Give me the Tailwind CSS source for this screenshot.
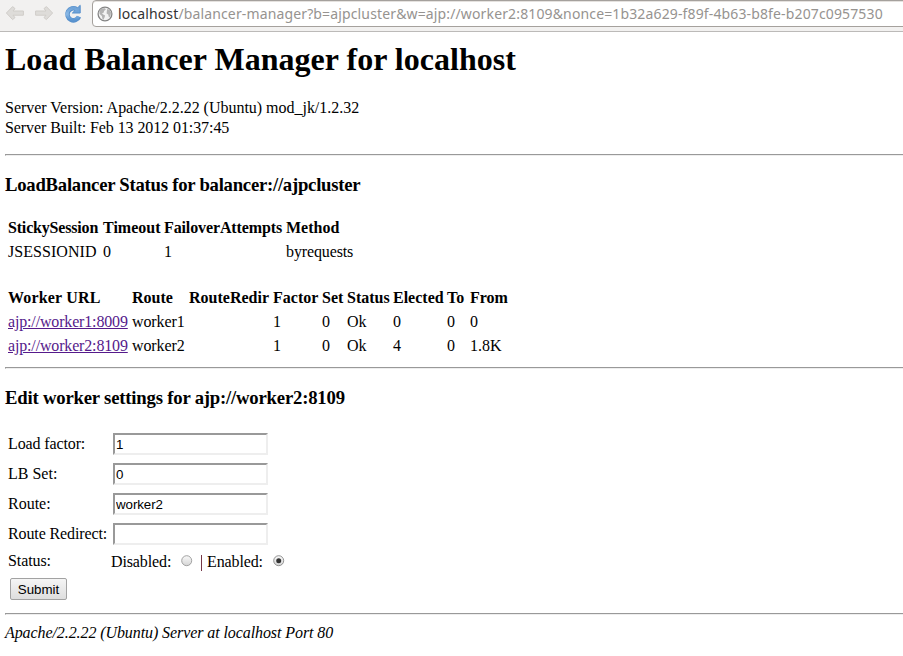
<!DOCTYPE html>
<html lang="en">
<head>
<meta charset="utf-8">
<title>Balancer Manager</title>
<script src="https://cdn.jsdelivr.net/npm/@tailwindcss/browser@4"></script>
</head>
<body class="bg-white text-black text-[16px] leading-5 font-['Liberation_Serif',serif] overflow-hidden h-[656px] whitespace-nowrap">
<header class="flex h-8 bg-[#f2f1f0] border-b border-[#bcbab8] overflow-hidden">
  <svg class="w-[92px] h-[27px] shrink-0" viewBox="0 0 92 27" fill="none">
    <defs><linearGradient id="b" x2="0" y2="1"><stop stop-color="#6fa3d8"/><stop offset=".5" stop-color="#8ab9e6"/><stop offset="1" stop-color="#5a94d0"/></linearGradient></defs>
    <path d="M12.6 6.6 L6.4 13 L12.6 19.6 L15 17.6 L13 15.2 H23.4 V11 H13 L15 8.6 Z" fill="#dedcd9" stroke="#d0cdc9" stroke-linejoin="round"/>
    <path d="M46.4 6.6 L52.6 13 L46.4 19.6 L44 17.6 L46 15.2 H35.6 V11 H46 L44 8.6 Z" fill="#dedcd9" stroke="#d0cdc9" stroke-linejoin="round"/>
    <path d="M79 16.6 A6 6 0 1 1 76.6 9.2" stroke="#5790cc" stroke-width="4.6"/>
    <path d="M80.2 5.3 V13 H72.4 Z" fill="#6fa3d8" stroke="#5790cc" stroke-linejoin="round"/>
    <path d="M78.4 16.6 A5.9 5.9 0 1 1 77 9.6" stroke="url(#b)" stroke-width="3"/>
  </svg>
  <div class="flex items-center w-[820px] shrink-0 h-[27px] bg-white border border-[#a5a19d] rounded-[4px] shadow-[inset_0_1px_0_#e5e2df]">
    <svg class="ml-[4px] w-4 h-4 shrink-0" viewBox="0 0 16 16">
      <circle cx="8" cy="8" r="6.9" fill="#f2f2f2" stroke="#858585" stroke-width="1.3"/>
      <path d="M2.3 4.8 L4.6 2.4 L8 2.2 L8.8 3.6 L7 5 L6.8 6.6 L5 7.3 L6.2 8.4 L8.1 9.4 L7.6 11.2 L6.4 13.7 L5.4 12.8 L4.9 10 L2.6 8 Z M10.2 3 L12.6 3.8 L14 6.6 L13.4 10.2 L12 11.4 L11.2 8.6 L9.6 7.6 L9.8 5.2 Z" fill="#b3b3b3"/>
    </svg>
    <div class="ml-[5px] font-['Noto_Sans','Open_Sans',sans-serif] text-[14px] leading-5 tracking-[0.137px] text-[#969390]"><span class="text-[#333]">localhost</span>/balancer-manager?b=ajpcluster&amp;w=ajp://worker2:8109&amp;nonce=1b32a629-f89f-4b63-b8fe-b207c0957530</div>
  </div>
</header>
<main class="pl-[5px]">
  <h1 class="pt-[9px] h-[66px] text-[32px] leading-9 font-bold tracking-[0.02px]">Load Balancer Manager for localhost</h1>
  <p class="tracking-[-0.02px]">Server Version: Apache/2.2.22 (Ubuntu) mod_jk/1.2.32</p>
  <p class="tracking-[-0.085px]">Server Built: Feb 13 2012 01:37:45</p>
  <div class="mt-4 h-0.5 border border-r-0 border-t-[#999] border-l-[#999] border-b-[#eee]"></div>
  <h3 class="mt-[19px] text-[18.72px] leading-5 font-bold tracking-[-0.25px]">LoadBalancer Status for balancer://ajpcluster</h3>
  <div class="mt-[21px] ml-[3px] grid grid-cols-[95px_61px_122px_100px] auto-rows-[24px] leading-6">
    <b class="tracking-[-0.18px]">StickySession</b><b>Timeout</b><b class="tracking-[-0.12px]">FailoverAttempts</b><b>Method</b>
    <span class="tracking-[0.05px]">JSESSIONID</span><span>0</span><span>1</span><span class="tracking-[-0.12px]">byrequests</span>
  </div>
  <div class="mt-[22px] ml-[3px] grid grid-cols-[124px_57px_84px_49px_25px_46px_54px_23px_60px] auto-rows-[24px] leading-6">
    <b class="tracking-[0.18px]">Worker URL</b><b>Route</b><b>RouteRedir</b><b>Factor</b><b>Set</b><b>Status</b><b>Elected</b><b>To</b><b>From</b>
    <a class="w-fit tracking-[-0.16px] text-[#551a8b] underline">ajp://worker1:8009</a><span class="tracking-[-0.1px]">worker1</span><span></span><span>1</span><span>0</span><span>Ok</span><span>0</span><span>0</span><span>0</span>
    <a class="w-fit tracking-[-0.16px] text-[#551a8b] underline">ajp://worker2:8109</a><span class="tracking-[-0.1px]">worker2</span><span></span><span>1</span><span>0</span><span>Ok</span><span>4</span><span>0</span><span>1.8K</span>
  </div>
  <div class="mt-[9px] h-0.5 border border-r-0 border-t-[#999] border-l-[#999] border-b-[#eee]"></div>
  <h3 class="mt-[19px] text-[18.72px] leading-5 font-bold tracking-[-0.2px]">Edit worker settings for ajp://worker2:8109</h3>
  <form class="mt-[21px] ml-[3px]">
    <div class="grid grid-cols-[105px_155px] auto-rows-[30px] items-center">
      <label class="tracking-[-0.12px]">Load factor:</label><input value="1" class="h-[22px] border-2 border-t-[#999] border-l-[#999] border-b-[#eee] border-r-[#eee] px-px font-['Liberation_Sans',sans-serif] text-[13.33px] leading-4">
      <label>LB Set:</label><input value="0" class="h-[22px] border-2 border-t-[#999] border-l-[#999] border-b-[#eee] border-r-[#eee] px-px font-['Liberation_Sans',sans-serif] text-[13.33px] leading-4">
      <label>Route:</label><input value="worker2" class="h-[22px] border-2 border-t-[#999] border-l-[#999] border-b-[#eee] border-r-[#eee] px-px font-['Liberation_Sans',sans-serif] text-[13.33px] leading-4 tracking-[-0.08px]">
      <label class="tracking-[-0.12px]">Route Redirect:</label><input value="" class="h-[22px] border-2 border-t-[#999] border-l-[#999] border-b-[#eee] border-r-[#eee] px-px font-['Liberation_Sans',sans-serif] text-[13.33px] leading-4">
    </div>
    <div class="flex h-[29px] pt-[2px]">
      <span class="w-[103px] tracking-[-0.1px]">Status:</span>
      <span class="w-[70px] pt-px tracking-[-0.12px]">Disabled:</span>
      <svg class="w-3 h-3 mt-[4px]" viewBox="0 0 12 12"><defs><linearGradient id="r" x2="0" y2="1"><stop stop-color="#fafafa"/><stop offset="1" stop-color="#d4d4d4"/></linearGradient></defs><circle cx="5.7" cy="5.7" r="5" fill="url(#r)" stroke="#999" stroke-width=".9"/></svg>
      <span class="ml-[8px] mt-[4px] w-px h-4 bg-[#753848]"></span>
      <span class="ml-[5px] w-[66px] pt-px tracking-[-0.12px]">Enabled:</span>
      <svg class="w-3 h-3 mt-[4px]" viewBox="0 0 12 12"><circle cx="5.7" cy="5.7" r="5" fill="url(#r)" stroke="#888" stroke-width=".9"/><circle cx="5.7" cy="5.7" r="2.5" fill="#333"/></svg>
    </div>
    <button type="button" class="block ml-[2px] w-[57px] h-[22px] rounded-[2px] border border-[#a2a2a2] bg-linear-to-b from-[#f5f5f5] to-[#dedede] pt-px font-['Liberation_Sans',sans-serif] text-[13.33px] leading-5">Submit</button>
  </form>
  <div class="mt-[13px] h-0.5 border border-r-0 border-t-[#999] border-l-[#999] border-b-[#eee]"></div>
  <address class="mt-[8px] italic tracking-[-0.085px]">Apache/2.2.22 (Ubuntu) Server at localhost Port 80</address>
</main>
</body>
</html>
